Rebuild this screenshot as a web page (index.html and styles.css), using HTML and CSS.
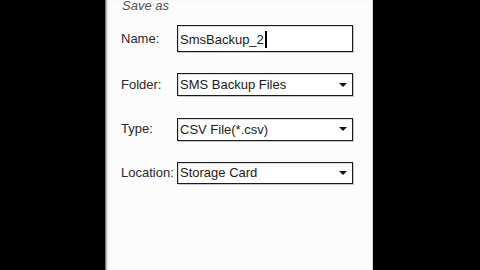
FILE: index.html
```html
<!DOCTYPE html>
<html>
<head>
<meta charset="utf-8">
<link rel="stylesheet" href="styles.css">
</head>
<body>
<div class="screen">
  <div class="panel">
    <div class="title">Save as</div>
    <div class="form">
      <div class="label name-label">Name:</div>
      <div class="field input"><span>SmsBackup_2</span><span class="caret"></span></div>
      <div class="label">Folder:</div>
      <div class="field select"><span>SMS Backup Files</span><span class="arrow"></span></div>
      <div class="label">Type:</div>
      <div class="field select"><span>CSV File(*.csv)</span><span class="arrow"></span></div>
      <div class="label">Location:</div>
      <div class="field select loc"><span>Storage Card</span><span class="arrow"></span></div>
    </div>
  </div>
</div>
</body>
</html>
```
FILE: styles.css
```css
html, body {
  margin: 0;
  padding: 0;
  background: #000;
  width: 480px;
  height: 270px;
  overflow: hidden;
  font-family: "Liberation Sans", Arial, sans-serif;
}
.screen {
  display: flex;
  height: 270px;
  padding-left: 105px;
}
.panel {
  width: 268px;
  height: 270px;
  background: #fcfcfc;
  border-left: 1px solid #777;
  border-right: 1px solid #d8d8d8;
  box-shadow: inset 2px 0 2px -1px #aaa;
  padding-left: 15px;
  box-sizing: border-box;
  flex: none;
}
.title {
  font-style: italic;
  font-size: 13px;
  color: #555;
  line-height: 14px;
  margin-top: -1px;
  margin-bottom: 12px;
  padding-left: 1px;
}
.form {
  display: grid;
  grid-template-columns: 56px 176px;
  grid-template-rows: 27px 23px 23px 22px;
  row-gap: 21px;
  align-items: center;
}
.form > :nth-child(5), .form > :nth-child(6) { margin-top: 1px; }
.form > :nth-child(7), .form > :nth-child(8) { margin-top: 1px; }
.label {
  font-size: 13px;
  color: #2a2a2a;
  line-height: 16px;
}
.field {
  box-sizing: border-box;
  height: 100%;
  border: 1px solid #1a1a1a;
  box-shadow: 1px 1px 0 #c8c8c8, inset 1px 1px 0 #ddd;
  background: #fff;
  display: flex;
  align-items: center;
  padding-left: 2px;
  font-size: 13px;
  color: #1a1a1a;
  position: relative;
}
.field.input {
  padding-top: 1px;
}
.caret {
  display: inline-block;
  width: 2px;
  height: 17px;
  background: #000;
  margin-left: 1px;
}
.arrow {
  position: absolute;
  right: 5px;
  top: 50%;
  margin-top: -2px;
  width: 0;
  height: 0;
  border-left: 4px solid transparent;
  border-right: 4px solid transparent;
  border-top: 4px solid #111;
}
```
